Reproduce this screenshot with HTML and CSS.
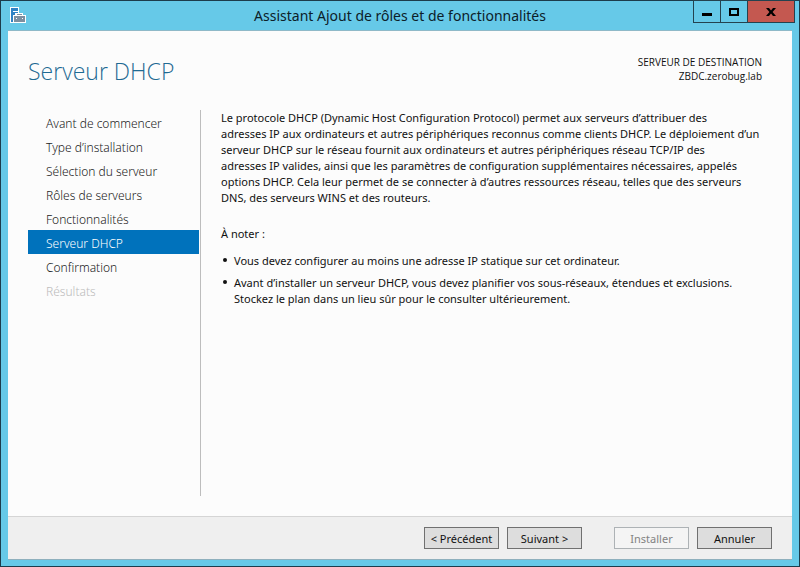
FILE: index.html
```html
<!DOCTYPE html>
<html lang="fr">
<head>
    <meta charset="UTF-8">
    <meta name="viewport" content="width=device-width, initial-scale=1.0">
    <title>Assistant Ajout de rôles et de fonctionnalités</title>
    <link rel="stylesheet" href="styles.css">
</head>
<body>

    <div class="window">
        <header class="titlebar">
            <svg class="app-icon" width="17" height="17" viewBox="0 0 17 17" aria-hidden="true">
                <path fill="#fff" d="M0 0h9v7H6v9H0z"/>
                <path fill="#2f82c4" d="M1 1h7v5H5v3H3v6H1z"/>
                <path fill="#fff" d="M3 4h5v1H3z"/>
                <path fill="#fff" d="M3 8h3V6h7v2h3v8H3z"/>
                <path fill="#7d8fa0" d="M4 9h11v6H4zM7 7h5v1H7z"/>
                <path fill="#fff" d="M6 11h1v1H6zM12 11h1v1h-1z"/>
            </svg>
            <h1 class="window-title">Assistant Ajout de rôles et de fonctionnalités</h1>
            <div class="window-controls">
                <button class="control" type="button" aria-label="Réduire">
                    <svg width="12" height="12" viewBox="0 0 12 12"><path fill="#000" d="M1 7h10v3H1z"/></svg>
                </button>
                <button class="control" type="button" aria-label="Agrandir">
                    <svg width="12" height="12" viewBox="0 0 12 12"><path fill="none" stroke="#000" stroke-width="2" d="M2 3h8v6H2z"/></svg>
                </button>
                <button class="control control-close" type="button" aria-label="Fermer">
                    <svg width="12" height="12" viewBox="0 0 12 12"><path fill="#000" d="M1 2h3l2 2.500L8 2h3L7.600 6l3.400 4H8L6 7.500 4 10H1l3.400-4z"/></svg>
                </button>
            </div>
        </header>

        <div class="content">
            <div class="page-header">
                <h2>Serveur DHCP</h2>
                <div class="destination">
                    <div>SERVEUR DE DESTINATION</div>
                    <div>ZBDC.zerobug.lab</div>
                </div>
            </div>

            <div class="page-body">
                <nav class="steps">
                    <a href="#">Avant de commencer</a>
                    <a href="#">Type d’installation</a>
                    <a href="#">Sélection du serveur</a>
                    <a href="#">Rôles de serveurs</a>
                    <a href="#">Fonctionnalités</a>
                    <a href="#" class="active" aria-current="step">Serveur DHCP</a>
                    <a href="#">Confirmation</a>
                    <a class="disabled" aria-disabled="true">Résultats</a>
                </nav>
                <main class="description">
                    <p>
                        Le protocole DHCP (Dynamic Host Configuration Protocol) permet aux serveurs d’attribuer des<br>
                        adresses IP aux ordinateurs et autres périphériques reconnus comme clients DHCP. Le déploiement d’un<br>
                        serveur DHCP sur le réseau fournit aux ordinateurs et autres périphériques réseau TCP/IP des<br>
                        adresses IP valides, ainsi que les paramètres de configuration supplémentaires nécessaires, appelés<br>
                        options DHCP. Cela leur permet de se connecter à d’autres ressources réseau, telles que des serveurs<br>
                        DNS, des serveurs WINS et des routeurs.
                    </p>
                    <p>À noter :</p>
                    <ul>
                        <li>Vous devez configurer au moins une adresse IP statique sur cet ordinateur.</li>
                        <li>
                            Avant d’installer un serveur DHCP, vous devez planifier vos sous-réseaux, étendues et exclusions.<br>
                            Stockez le plan dans un lieu sûr pour le consulter ultérieurement.
                        </li>
                    </ul>
                </main>
            </div>

            <footer class="footer">
                <div class="button-group">
                    <button class="btn" type="button">&lt; Précédent</button>
                    <button class="btn" type="button">Suivant &gt;</button>
                </div>
                <div class="button-group">
                    <button class="btn" type="button" disabled>Installer</button>
                    <button class="btn" type="button">Annuler</button>
                </div>
            </footer>
        </div>
    </div>

</body>
</html>
```

FILE: styles.css
```css
* {
    box-sizing: border-box;
}
body {
    margin: 0;
    font-family: 'Noto Sans', 'Open Sans', sans-serif;
    font-size: 11px;
    line-height: 16px;
    color: #111;
}
h1, h2, p, ul {
    margin: 0;
    padding: 0;
    font-weight: normal;
}
button {
    font-family: inherit;
    font-size: inherit;
    padding: 0;
}
.window {
    display: flex;
    flex-direction: column;
    min-height: 100vh;
    padding: 0 7px 6px;
    border: 1px solid #1c3c4c;
    background-color: #66c9e8;
}
.titlebar {
    display: grid;
    grid-template-columns: 1fr auto 1fr;
    height: 29px;
}
.app-icon {
    margin: 6px 0 0 2px;
}
.window-title {
    font-size: 14px;
    line-height: 30px;
    color: #0c2029;
}
.window-controls {
    display: flex;
    justify-self: end;
    height: 23px;
    margin: -1px -3px 0 0;
    border: 1px solid #24424f;
}
.control {
    display: flex;
    align-items: center;
    justify-content: center;
    width: 27px;
    border: none;
    border-right: 1px solid #24424f;
    background-color: transparent;
}
.control-close {
    width: 46px;
    border-right: none;
    background-color: #c45850;
}
.content {
    flex: 1;
    display: flex;
    flex-direction: column;
    border-top: 1px solid #8fb9c8;
    border-bottom: 1px solid #8fb0bd;
    background-color: #fcfcfc;
}
.page-header {
    display: flex;
    justify-content: space-between;
    padding: 22px 30px 0 20px;
    height: 79px;
}
.page-header h2 {
    font-family: 'Open Sans', sans-serif;
    font-size: 23px;
    font-weight: 300;
    line-height: 36px;
    color: #1f6a93;
}
.destination {
    font-family: 'Open Sans', sans-serif;
    font-size: 10px;
    line-height: 14px;
    padding-top: 2px;
    text-align: right;
}
.page-body {
    flex: 1;
    display: flex;
    padding: 0 20px;
    margin-bottom: 20px;
}
.steps {
    flex: 0 0 173px;
    padding-right: 1px;
    border-right: 1px solid #bdbdbd;
}
.steps a {
    display: block;
    padding: 4px 0 0 18px;
    font-size: 12px;
    font-weight: 300;
    line-height: 20px;
    color: #222;
    text-decoration: none;
}
.steps a.active {
    background-color: #0072bc;
    color: #fff;
}
.steps a.disabled {
    color: #bbb;
}
.description {
    flex: 1;
    padding-left: 20px;
    white-space: nowrap;
}
.description p {
    margin-bottom: 20px;
}
.description p + p {
    margin-bottom: 11px;
}
.description ul {
    list-style: none;
}
.description li {
    position: relative;
    padding-left: 13px;
    margin-bottom: 6px;
}
.description li::before {
    content: "";
    position: absolute;
    left: 2px;
    top: 5px;
    width: 4px;
    height: 4px;
    border-radius: 50%;
    background-color: #111;
}
.footer {
    display: flex;
    justify-content: flex-end;
    gap: 32px;
    padding: 10px 20px;
    border-top: 1px solid #d5d5d5;
    background-color: #efefef;
}
.button-group {
    display: flex;
    gap: 8px;
}
.btn {
    width: 75px;
    height: 22px;
    border: 1px solid #707070;
    background-color: #dddddd;
    color: #111;
    white-space: nowrap;
}
.btn:disabled {
    border-color: #adb2b5;
    background-color: #f4f4f4;
    color: #838383;
}
```
